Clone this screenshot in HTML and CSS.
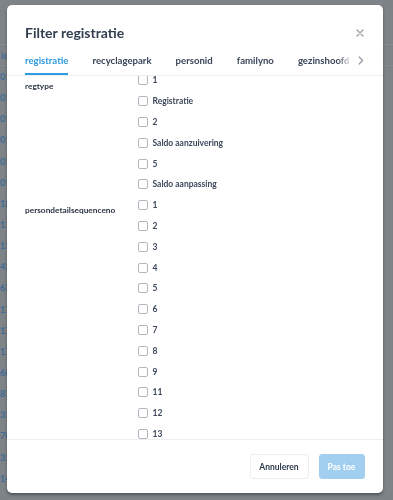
FILE: index.html
```html
<!DOCTYPE html>
<html lang="nl">
<head>
<meta charset="utf-8">
<title>Filter registratie</title>
<link rel="stylesheet" href="styles.css">
</head>
<body>
<div class="page">
  <div class="page-top"></div>
  <div class="page-head"><span>id</span></div>
  <ul class="page-rows">
    <li>0123</li><li>0124</li><li>0125</li><li>0126</li><li>0127</li><li>0128</li>
    <li>1802</li><li>1103</li><li>1504</li><li>4305</li><li>6206</li><li>1707</li>
    <li>1708</li><li>1709</li><li>6810</li><li>8711</li><li>3512</li><li>7013</li>
    <li>3514</li><li>1415</li>
  </ul>
</div>

<div class="modal">
  <header class="modal-head">
    <h1 class="modal-title">Filter registratie</h1>
    <button class="close" aria-label="Sluiten">
      <svg width="8" height="8" viewBox="0 0 8 8"><path d="M1 1L7 7M7 1L1 7" stroke="#9aa0a6" stroke-width="1.3" stroke-linecap="round"/></svg>
    </button>
  </header>
  <nav class="tabs">
    <div class="tab-strip">
      <span class="tab active">registratie</span>
      <span class="tab">recyclagepark</span>
      <span class="tab">personid</span>
      <span class="tab">familyno</span>
      <span class="tab">gezinshoofd</span>
    </div>
    <button class="tab-next" aria-label="Volgende">
      <svg width="6" height="9" viewBox="0 0 6 9"><path d="M1.2 1L4.6 4.5L1.2 8" fill="none" stroke="#9aa0a6" stroke-width="1.3" stroke-linecap="round" stroke-linejoin="round"/></svg>
    </button>
  </nav>
  <div class="modal-body">
    <div class="scroll">
      <section class="group">
        <div class="label">regtype</div>
        <div class="options">
          <label class="opt"><input type="checkbox"><span>1</span></label>
          <label class="opt"><input type="checkbox"><span>Registratie</span></label>
          <label class="opt"><input type="checkbox"><span>2</span></label>
          <label class="opt"><input type="checkbox"><span>Saldo aanzuivering</span></label>
          <label class="opt"><input type="checkbox"><span>5</span></label>
          <label class="opt"><input type="checkbox"><span>Saldo aanpassing</span></label>
        </div>
      </section>
      <section class="group">
        <div class="label">persondetailsequenceno</div>
        <div class="options">
          <label class="opt"><input type="checkbox"><span>1</span></label>
          <label class="opt"><input type="checkbox"><span>2</span></label>
          <label class="opt"><input type="checkbox"><span>3</span></label>
          <label class="opt"><input type="checkbox"><span>4</span></label>
          <label class="opt"><input type="checkbox"><span>5</span></label>
          <label class="opt"><input type="checkbox"><span>6</span></label>
          <label class="opt"><input type="checkbox"><span>7</span></label>
          <label class="opt"><input type="checkbox"><span>8</span></label>
          <label class="opt"><input type="checkbox"><span>9</span></label>
          <label class="opt"><input type="checkbox"><span>11</span></label>
          <label class="opt"><input type="checkbox"><span>12</span></label>
          <label class="opt"><input type="checkbox"><span>13</span></label>
        </div>
      </section>
    </div>
  </div>
  <footer class="modal-foot">
    <button class="btn btn-cancel">Annuleren</button>
    <button class="btn btn-apply" disabled>Pas toe</button>
  </footer>
</div>
</body>
</html>
```
FILE: styles.css
```css
* { box-sizing: border-box; }

html, body {
  margin: 0;
  height: 100%;
}

body {
  background: #7e8387;
  font-family: Lato, "Open Sans", sans-serif;
  overflow: hidden;
}

/* page behind the backdrop */
.page {
  color: #3f6c96;
  font-size: 9px;
  font-weight: 700;
}
.page-top {
  height: 45px;
  border-bottom: 1px solid #878c90;
}
.page-head {
  height: 21px;
  padding-left: 1px;
  line-height: 21px;
  border-bottom: 1px solid #878c90;
}
.page-rows {
  list-style: none;
  margin: 0;
  padding: 0;
}
.page-rows li {
  height: 21.15px;
  line-height: 21.15px;
}

/* modal */
.modal {
  position: fixed;
  left: 7px;
  top: 5px;
  width: 376px;
  height: 488px;
  background: #fff;
  border-radius: 5px;
  box-shadow: 0 2px 3px rgba(0, 0, 0, 0.35);
  display: flex;
  flex-direction: column;
  overflow: hidden;
}

.modal-head {
  display: flex;
  align-items: center;
  justify-content: space-between;
  padding: 19px 18px 0 18px;
}
.modal-title {
  margin: 0;
  font-size: 14px;
  line-height: 18px;
  font-weight: 700;
  color: #323e4f;
}
.close {
  border: 0;
  background: none;
  padding: 0;
  width: 10px;
  height: 10px;
  display: flex;
  align-items: center;
  justify-content: center;
}

.tabs {
  display: flex;
  align-items: flex-start;
  margin-top: 12px;
  padding: 0 0 0 18px;
  border-bottom: 1px solid #eceef0;
  height: 22px;
}
.tab-strip {
  flex: 1;
  display: flex;
  gap: 24px;
  overflow: hidden;
  white-space: nowrap;
  -webkit-mask-image: linear-gradient(to right, #000 calc(100% - 14px), transparent);
  mask-image: linear-gradient(to right, #000 calc(100% - 14px), transparent);
}
.tab {
  font-size: 9.6px;
  line-height: 13px;
  font-weight: 700;
  color: #3a4559;
  padding-bottom: 6px;
  border-bottom: 2px solid transparent;
}
.tab.active {
  color: #2f9be0;
  border-bottom-color: #2f9be0;
}
.tab-next {
  border: 0;
  background: none;
  width: 31px;
  height: 13px;
  display: flex;
  align-items: center;
  justify-content: flex-start;
  padding: 0 0 0 6px;
}

.modal-body {
  flex: 1;
  overflow: hidden;
  padding: 0 18px;
}
.scroll {
  margin-top: -6px;
}
.group {
  display: grid;
  grid-template-columns: 112.5px 1fr;
}
.label {
  padding-top: 9.5px;
  font-size: 8.3px;
  line-height: 13px;
  font-weight: 700;
  color: #2b3442;
}
.options {
  display: flex;
  flex-direction: column;
}
.opt {
  display: flex;
  align-items: center;
  gap: 5px;
  height: 20.8px;
  font-size: 8.5px;
  font-weight: 700;
  color: #3c475a;
}
.opt input {
  -webkit-appearance: none;
  appearance: none;
  margin: 0;
  width: 10px;
  height: 10px;
  border: 1px solid #b3b7bd;
  border-radius: 2px;
  background: #fff;
}

.modal-foot {
  display: flex;
  justify-content: flex-end;
  gap: 10px;
  padding: 14px 18.5px 14px;
  border-top: 1px solid #eceef0;
}
.btn {
  height: 25px;
  border-radius: 3px;
  font-family: inherit;
  font-size: 8.5px;
  font-weight: 700;
  padding: 0;
  white-space: nowrap;
}
.btn-cancel {
  width: 59px;
  background: #fff;
  border: 1px solid #eceef0;
  color: #2f3b4c;
}
.btn-apply {
  width: 46px;
  background: #a2cff0;
  border: 1px solid #a2cff0;
  color: #fff;
}
```
